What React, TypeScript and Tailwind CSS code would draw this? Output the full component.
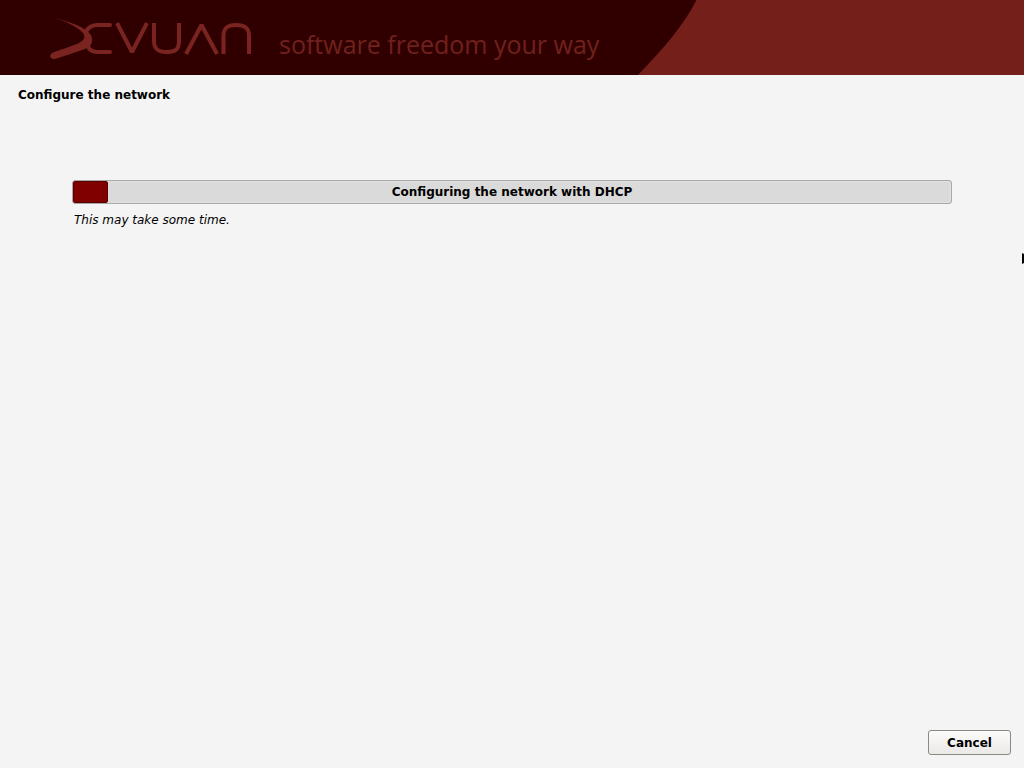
import React from "react";

function DevuanLogo() {
  return (
    <svg
      role="img"
      aria-label="Devuan"
      className="h-[44px] w-[204px] shrink-0"
      viewBox="49 17 204 44"
      fill="none"
    >
      <path
        d="M56 18.500 C67 21 79 25 87 31 C91 34 92.500 37 92 41 C91.500 46 88 48 82 50 C74 53 64 56 55 59 C51 60 48.500 56 52 53 C59 50 70 47 79 43 C85 40 86 36 82 32 C76 26 66 21.500 56 18.500 Z"
        fill="#7a2420"
      />
      <g stroke="#7a2421" strokeWidth="4">
        <path d="M110 25 H98 C93 25 88 27 86 32" strokeLinecap="round" />
        <path d="M110 52 H98 C93 52 89 50 88 46" strokeLinecap="round" />
        <path d="M117 23 L132 52 L147 23" strokeLinejoin="bevel" />
        <path d="M154 23 V41 C154 49 158 52 167 52 C176 52 179 49 179 41 V23" />
        <path d="M186 54 L201.500 25 L217 54" strokeLinejoin="bevel" />
        <path d="M223.500 54 V36 C223.500 28 227 25 236 25 C245 25 249 28 249 36 V54" />
      </g>
    </svg>
  );
}

function Banner() {
  return (
    <header className="flex h-[75px] shrink-0 bg-[#741f19]">
      <div className="flex shrink-0 items-start bg-[#300000] pl-[49px] pt-[17px]">
        <DevuanLogo />
        <p className="w-[385px] pl-[26px] pt-[8px] font-['Open_Sans',sans-serif] text-[25px] leading-[38px] font-normal whitespace-nowrap text-[#70201d]">
          software freedom your way
        </p>
      </div>
      <svg aria-hidden="true" className="h-[75px] w-[60px] shrink-0" viewBox="0 0 60 75">
        <path d="M0 0 H58.500 C46 25 25 49 0 75 Z" fill="#300000" />
      </svg>
    </header>
  );
}

function ProgressBar({ label, value }: { label: string; value: number }) {
  return (
    <div
      role="progressbar"
      aria-label={label}
      aria-valuemin={0}
      aria-valuemax={100}
      aria-valuenow={value}
      className="grid h-[24px] rounded-[3px] border border-[#a8a8a8] bg-[#dadada] shadow-[inset_0_0_0_1px_#e0e0e0]"
    >
      <div
        className="col-start-1 row-start-1 rounded-[2px] border border-[#5c0000] bg-[#800000]"
        style={{ width: `${value}%` }}
      />
      <span className="col-start-1 row-start-1 text-center leading-[22px] font-bold">{label}</span>
    </div>
  );
}

function Pointer() {
  return (
    <svg
      aria-hidden="true"
      className="pointer-events-none absolute top-[253px] right-0 h-[11px] w-[2px]"
      viewBox="0 0 2 11"
    >
      <path d="M0 0 L2 1 V10 L0 11 Z" fill="#000" />
    </svg>
  );
}

export default function App() {
  return (
    <div className="relative flex min-h-screen flex-col overflow-hidden bg-[#f4f4f4] font-['DejaVu_Sans',sans-serif] text-[12px] text-black">
      <Banner />
      <main className="flex grow flex-col">
        <h1 className="px-[18px] pt-[10px] leading-[20px] font-bold">Configure the network</h1>
        <div className="px-[72px] pt-[75px]">
          <ProgressBar label="Configuring the network with DHCP" value={4} />
          <p className="pt-[6px] pl-[2px] leading-[20px] italic">This may take some time.</p>
        </div>
      </main>
      <footer className="flex justify-end px-[13px] pb-[13px]">
        <button
          type="button"
          className="h-[25px] w-[83px] rounded-[3px] border border-[#8c8884] bg-linear-to-b from-[#fbfbfa] to-[#ebe9e7] leading-[22px] font-bold"
        >
          Cancel
        </button>
      </footer>
      <Pointer />
    </div>
  );
}
